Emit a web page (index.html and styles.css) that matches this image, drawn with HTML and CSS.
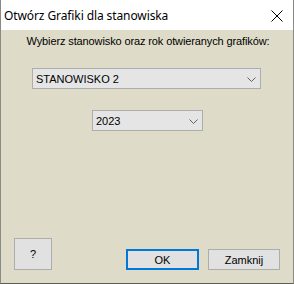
FILE: index.html
```html
<!DOCTYPE html>
<html lang="pl">
    <head>
        <meta charset="UTF-8" />
        <title>Otwórz Grafiki dla stanowiska</title>
        <link rel="stylesheet" href="styles.css">
    </head>
    <body>
        <div class="window">
            <div class="titlebar">
                <span class="title">Otwórz Grafiki dla stanowiska</span>
                <span class="close">
                    <svg width="12" height="12" viewBox="0 0 12 12">
                        <path d="M0.5 0.5 L11.5 11.5 M11.5 0.5 L0.5 11.5" stroke="#000" stroke-width="1" fill="none" />
                    </svg>
                </span>
            </div>

            <div class="content">
                <div class="label">Wybierz stanowisko oraz rok otwieranych grafików:</div>

                <div class="combo combo-station">
                    <span class="combo-text">STANOWISKO 2</span>
                    <svg class="chevron" width="9" height="5" viewBox="0 0 9 5">
                        <path d="M0.5 0.5 L4.5 4.5 L8.5 0.5" stroke="#606060" stroke-width="1" fill="none" />
                    </svg>
                </div>

                <div class="combo combo-year">
                    <span class="combo-text">2023</span>
                    <svg class="chevron" width="9" height="5" viewBox="0 0 9 5">
                        <path d="M0.5 0.5 L4.5 4.5 L8.5 0.5" stroke="#606060" stroke-width="1" fill="none" />
                    </svg>
                </div>

                <div class="buttons">
                    <button class="btn btn-help">?</button>
                    <div class="btn-group">
                        <button class="btn btn-ok">OK</button>
                        <button class="btn btn-close">Zamknij</button>
                    </div>
                </div>
            </div>
        </div>
    </body>
</html>
```

FILE: styles.css
```css
body {
    margin: 0;
    padding: 0;
    font-family: "Liberation Sans", Arial, sans-serif;
}

.window {
    width: 294px;
    height: 284px;
    box-sizing: border-box;
    display: flex;
    flex-direction: column;
    background: #dedcc8;
    border-left: 1px solid #8a8a84;
    border-right: 1px solid #8a8a84;
    border-bottom: 1px solid #5c5c58;
}

.titlebar {
    height: 30px;
    flex-shrink: 0;
    display: flex;
    align-items: center;
    justify-content: space-between;
    background: #ffffff;
    padding: 0 10px 0 3px;
}

.title {
    font-family: "Noto Sans", sans-serif;
    font-size: 12px;
    letter-spacing: -0.1px;
    color: #000;
    margin-top: 1px;
}

.close {
    display: flex;
    margin-top: 1px;
}

.content {
    flex: 1;
    display: flex;
    flex-direction: column;
    padding: 5px 0 13px 0;
}

.label {
    font-size: 11px;
    line-height: 13px;
    letter-spacing: -0.12px;
    text-align: center;
    color: #000;
    padding-left: 2px;
}

.combo {
    box-sizing: border-box;
    height: 21px;
    display: flex;
    align-items: center;
    justify-content: space-between;
    background: #e5e5e5;
    border: 1px solid #adadad;
    padding: 0 4px 0 3px;
    font-size: 11px;
    color: #000;
}

.combo-station {
    margin: 20px 0 0 31px;
    width: 229px;
}

.combo-year {
    margin: 21px 0 0 91px;
    width: 111px;
}

.chevron {
    display: block;
    margin-top: 1px;
}

.buttons {
    margin-top: auto;
    display: flex;
    align-items: flex-end;
    justify-content: space-between;
    padding: 0 13px 0 13px;
}

.btn-group {
    display: flex;
    gap: 9px;
}

.btn {
    box-sizing: border-box;
    margin: 0;
    padding: 0;
    font-family: "Liberation Sans", Arial, sans-serif;
    font-size: 11px;
    color: #000;
    background: #e1e1e1;
    border: 1px solid #adadad;
    border-radius: 0;
}

.btn-help {
    width: 38px;
    height: 32px;
}

.btn-ok {
    width: 73px;
    height: 21px;
    border: 2px solid #0078d7;
}

.btn-close {
    width: 72px;
    height: 21px;
}
```
